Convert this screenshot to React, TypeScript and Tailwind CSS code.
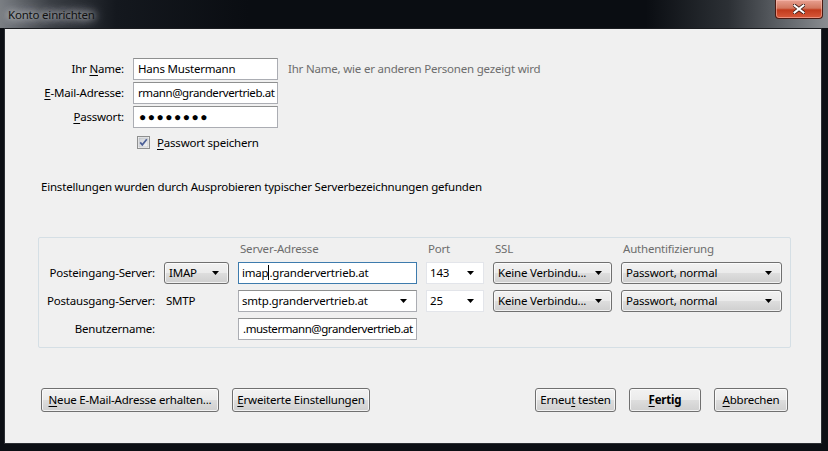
import React from 'react';

const font = "font-['Noto_Sans','Liberation_Sans',sans-serif]";

const Arrow: React.FC = () => (
  <svg width="7" height="4" viewBox="0 0 7 4" className="shrink-0">
    <path d="M0 0h7L3.5 4z" fill="#000" />
  </svg>
);

const U: React.FC<{ children: React.ReactNode }> = ({ children }) => <span className="underline underline-offset-2">{children}</span>;

const TextField: React.FC<{ children: React.ReactNode; className?: string }> = ({ children, className = '' }) => (
  <div className={`h-[22px] bg-white border border-[#abadb3] border-t-[#8e8f8f] flex items-center px-[4px] overflow-hidden whitespace-nowrap ${className}`}>
    <span>{children}</span>
  </div>
);

const WinButton: React.FC<{ children: React.ReactNode; className?: string }> = ({ children, className = '' }) => (
  <div
    className={`h-[24px] rounded-[3px] border border-[#707070] bg-[linear-gradient(180deg,#f2f2f2_0%,#ebebeb_48%,#dddddd_52%,#cfcfcf_100%)] shadow-[inset_0_0_0_1px_rgba(255,255,255,0.7)] flex items-center justify-center whitespace-nowrap ${className}`}
  >
    <span>{children}</span>
  </div>
);

const DropButton: React.FC<{ label: string; className?: string }> = ({ label, className = '' }) => (
  <div
    className={`h-[22px] rounded-[3px] border border-[#707070] bg-[linear-gradient(180deg,#f2f2f2_0%,#ebebeb_48%,#dddddd_52%,#cfcfcf_100%)] shadow-[inset_0_0_0_1px_rgba(255,255,255,0.7)] flex items-center justify-between pl-[4px] pr-[9px] whitespace-nowrap ${className}`}
  >
    <span>{label}</span>
    <Arrow />
  </div>
);

const Combo: React.FC<{ label: string; faint?: boolean }> = ({ label, faint }) => (
  <div
    className={`h-[22px] bg-white border ${faint ? 'border-[#e3e5ea]' : 'border-[#abadb3] border-t-[#8e8f8f]'} flex items-center justify-between pl-[3px] pr-[9px] whitespace-nowrap`}
  >
    <span>{label}</span>
    <Arrow />
  </div>
);

const Checkbox: React.FC = () => (
  <svg width="13" height="13" viewBox="0 0 13 13" className="shrink-0">
    <defs>
      <linearGradient id="cbg" x1="0" y1="0" x2="1" y2="1">
        <stop offset="0" stopColor="#cbcfd5" />
        <stop offset="1" stopColor="#f6f6f6" />
      </linearGradient>
    </defs>
    <rect x="0.5" y="0.5" width="12" height="12" fill="#f4f4f4" stroke="#8e8f8f" />
    <rect x="2" y="2" width="9" height="9" fill="url(#cbg)" stroke="#b4b7bc" strokeWidth="0.6" />
    <path d="M3.2 6.4 L5.3 8.9 L9.8 3.2" fill="none" stroke="#4b5f97" strokeWidth="1.7" />
  </svg>
);

export default function App() {
  return (
    <div className={`w-[828px] h-[451px] bg-[#0c0f14] flex flex-col text-[11.5px] tracking-[-0.2px] text-black ${font}`}>
      {/* title bar */}
      <div className="h-[28px] shrink-0 flex items-start bg-[linear-gradient(90deg,#7a7e83_0%,#3b3f45_6%,#14181e_14%,#0a0d12_30%,#0a0d12_78%,#2c3035_88%,#6a6e73_96%,#8a8d91_100%)]">
        <div className="pl-[8px] pt-[6px] text-[#111] [text-shadow:0_0_6px_#c8ccd0,0_0_10px_#c8ccd0,0_0_14px_#c8ccd0]">
          Konto einrichten
        </div>
        <div className="ml-auto mr-[5px] w-[48px] h-[19px] rounded-b-[4px] border border-t-0 border-[#4a1a12] bg-[linear-gradient(180deg,#e8a091_0%,#d2775f_45%,#c13a1c_55%,#d8593a_100%)] shadow-[inset_0_0_0_1px_rgba(255,200,190,0.5)] flex items-center justify-center">
          <svg width="12" height="10" viewBox="0 0 12 10">
            <path d="M1 1 L11 9 M11 1 L1 9" stroke="#3a1a14" strokeWidth="3.6" strokeLinecap="square" />
            <path d="M1.5 1.5 L10.5 8.5 M10.5 1.5 L1.5 8.5" stroke="#ffffff" strokeWidth="2" strokeLinecap="square" />
          </svg>
        </div>
      </div>

      {/* body */}
      <div className="flex-1 flex pl-[4px] pr-[6px] pb-[7px]">
        <div className="flex-1 border border-[#2b2e33] border-t-[#1a1c20] bg-[#f0f0f0] flex flex-col">
          {/* account fields */}
          <div className="pt-[29px] grid grid-cols-[119px_145px_auto] gap-x-[9px] gap-y-[2px] items-center whitespace-nowrap">
            <div className="text-right">Ihr <U>N</U>ame:</div>
            <TextField>Hans Mustermann</TextField>
            <div className="pl-[1px] text-[#6d6d6d]">Ihr Name, wie er anderen Personen gezeigt wird</div>

            <div className="text-right"><U>E</U>-Mail-Adresse:</div>
            <TextField className="px-[2px] tracking-[-0.4px]">rmann@grandervertrieb.at</TextField>
            <div />

            <div className="text-right"><U>P</U>asswort:</div>
            <TextField className="px-[5px] text-[12px] tracking-[1.5px]">●●●●●●●●</TextField>
            <div />

            <div />
            <div className="col-span-2 flex items-center gap-[7px] pl-[4px] pt-[4px]">
              <Checkbox />
              <span><U>P</U>asswort speichern</span>
            </div>
          </div>

          <div className="pl-[36px] pt-[27px]">Einstellungen wurden durch Ausprobieren typischer Serverbezeichnungen gefunden</div>

          {/* server box */}
          <div className="mt-[41px] ml-[33px] mr-[30px] border border-[#d5dfe5] rounded-[2px] pl-[8px] pr-[7px] pt-[3px] pb-[7px] grid grid-cols-[108px_65px_179px_58px_119px_161px] gap-x-[9px] gap-y-[6px] items-center whitespace-nowrap">
            <div />
            <div />
            <div className="pl-[2px] text-[#6d6d6d] h-[15px] leading-[15px]">Server-Adresse</div>
            <div className="pl-[2px] text-[#6d6d6d] h-[15px] leading-[15px]">Port</div>
            <div className="pl-[2px] text-[#6d6d6d] h-[15px] leading-[15px]">SSL</div>
            <div className="pl-[2px] text-[#6d6d6d] h-[15px] leading-[15px]">Authentifizierung</div>

            <div className="text-right">Posteingang-Server:</div>
            <DropButton label="IMAP" />
            <div className="h-[22px] bg-white border border-[#3d7bad] flex items-center px-[3px] whitespace-nowrap overflow-hidden">
              <span>imap</span>
              <span className="w-px h-[15px] bg-black" />
              <span>.grandervertrieb.at</span>
            </div>
            <Combo label="143" faint />
            <DropButton label="Keine Verbindu..." />
            <DropButton label="Passwort, normal" />

            <div className="text-right">Postausgang-Server:</div>
            <div className="pl-[2px]">SMTP</div>
            <Combo label="smtp.grandervertrieb.at" />
            <Combo label="25" faint />
            <DropButton label="Keine Verbindu..." />
            <DropButton label="Passwort, normal" />

            <div className="text-right">Benutzername:</div>
            <div />
            <TextField className="px-[1px] tracking-[-0.45px]">.mustermann@grandervertrieb.at</TextField>
            <div />
            <div />
            <div />
          </div>

          {/* buttons */}
          <div className="mt-[40px] pl-[36px] pr-[33px] flex items-center gap-[13px]">
            <WinButton className="w-[178px]"><U>N</U>eue E-Mail-Adresse erhalten...</WinButton>
            <WinButton className="w-[138px]"><U>E</U>rweiterte Einstellungen</WinButton>
            <div className="flex-1" />
            <WinButton className="w-[81px]">Erneu<U>t</U> testen</WinButton>
            <WinButton className="w-[72px] font-bold"><U>F</U>ertig</WinButton>
            <WinButton className="w-[74px]"><U>A</U>bbrechen</WinButton>
          </div>
        </div>
      </div>
    </div>
  );
}
